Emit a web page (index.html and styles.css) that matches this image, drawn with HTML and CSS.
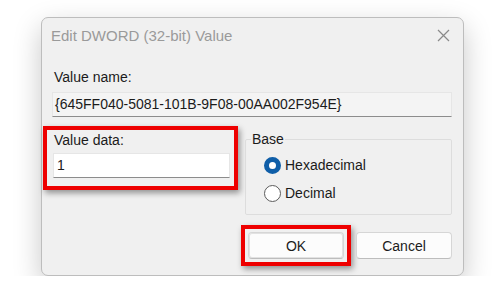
FILE: index.html
```html
<!doctype html>
<html lang="en">
  <head>
    <meta charset="UTF-8" />
    <title>Edit DWORD (32-bit) Value</title>
    <link rel="stylesheet" href="styles.css">
  </head>
  <body>
    <div class="stage">
      <div class="dialog">
        <!-- Title bar -->
        <div class="titlebar">
          <span class="title">Edit DWORD (32-bit) Value</span>
          <svg class="close" width="13" height="13" viewBox="0 0 13 13">
            <path d="M1 1 L12 12 M12 1 L1 12" stroke="#8a8a8a" stroke-width="1.2" fill="none" />
          </svg>
        </div>

        <div class="body">
          <div class="label">Value name:</div>
          <div class="field name-field">{645FF040-5081-101B-9F08-00AA002F954E}</div>

          <div class="row">
            <div class="value-data highlight">
              <div class="label">Value data:</div>
              <div class="field data-field">1</div>
            </div>

            <fieldset class="base">
              <legend>Base</legend>
              <div class="radio">
                <span class="dot checked"></span>
                <span>Hexadecimal</span>
              </div>
              <div class="radio">
                <span class="dot"></span>
                <span>Decimal</span>
              </div>
            </fieldset>
          </div>

          <div class="buttons">
            <div class="ok-wrap highlight">
              <button class="btn">OK</button>
            </div>
            <button class="btn">Cancel</button>
          </div>
        </div>
      </div>
    </div>
  </body>
</html>
```

FILE: styles.css
```css
body {
  margin: 0;
  background: #ffffff;
  font-family: "Liberation Sans", Arial, sans-serif;
  font-size: 14px;
  color: #1b1b1b;
}

.stage {
  padding: 17px 0 0 41px;
}

/* Dialog window */
.dialog {
  width: 423px;
  height: 259px;
  box-sizing: border-box;
  background: #f0f0f0;
  border: 1px solid #bdbdbd;
  border-radius: 7px;
  box-shadow: 0 10px 28px rgba(0, 0, 0, 0.22);
}

.titlebar {
  display: flex;
  justify-content: space-between;
  align-items: center;
  height: 34px;
  padding: 0 13px 0 9px;
}

.title {
  font-size: 15px;
  color: #9a9a9a;
}

.close {
  display: block;
}

.body {
  padding: 0 11px 0 10px;
}

.label {
  line-height: 18px;
}

.body > .label {
  margin-top: 16px;
  padding-left: 2px;
}

.field {
  box-sizing: border-box;
  height: 25px;
  line-height: 23px;
  padding-left: 2px;
  border: 1px solid #e6e6e6;
  border-bottom: 1px solid #8c8c8c;
}

.name-field {
  margin-top: 6px;
  background: #f4f4f4;
}

/* Lower row */
.row {
  display: flex;
  align-items: flex-start;
  gap: 7px;
  margin-top: 9px;
}

.highlight {
  border: 4px solid #ee0000;
  box-shadow: 2px 3px 6px rgba(0, 0, 0, 0.4);
}

.value-data {
  box-sizing: border-box;
  width: 195px;
  margin-left: -9px;
  padding: 1px 4px 8px 6px;
}

.value-data .label {
  padding-left: 1px;
}

.data-field {
  margin-top: 4px;
  background: #ffffff;
  padding-left: 3px;
}

.base {
  flex: 1;
  margin: 4px 0 0 0;
  padding: 3px 0 7px 5px;
  min-width: 0;
  border: 1px solid #dddddd;
  border-radius: 2px;
}

.base legend {
  padding: 0 1px;
  line-height: 18px;
}

.radio {
  display: flex;
  align-items: center;
  gap: 4px;
  height: 28px;
  margin-left: 13px;
}

.dot {
  box-sizing: border-box;
  width: 17px;
  height: 17px;
  border-radius: 50%;
  border: 1px solid #5c5c5c;
  background: #ffffff;
}

.dot.checked {
  border: 5px solid #0f5ea8;
  background: #ffffff;
}

/* Buttons */
.buttons {
  display: flex;
  justify-content: flex-end;
  align-items: center;
  gap: 5px;
  margin-top: 10px;
}

.ok-wrap {
  padding: 3px;
}

.btn {
  display: block;
  width: 96px;
  height: 27px;
  font-family: "Liberation Sans", Arial, sans-serif;
  font-size: 14px;
  color: #1b1b1b;
  background: #fcfcfc;
  border: 1px solid #d6d6d6;
  border-bottom-color: #bdbdbd;
  border-radius: 4px;
}

.ok-wrap .btn {
  box-shadow: inset 0 0 0 1px #e2e2e2;
}
```
